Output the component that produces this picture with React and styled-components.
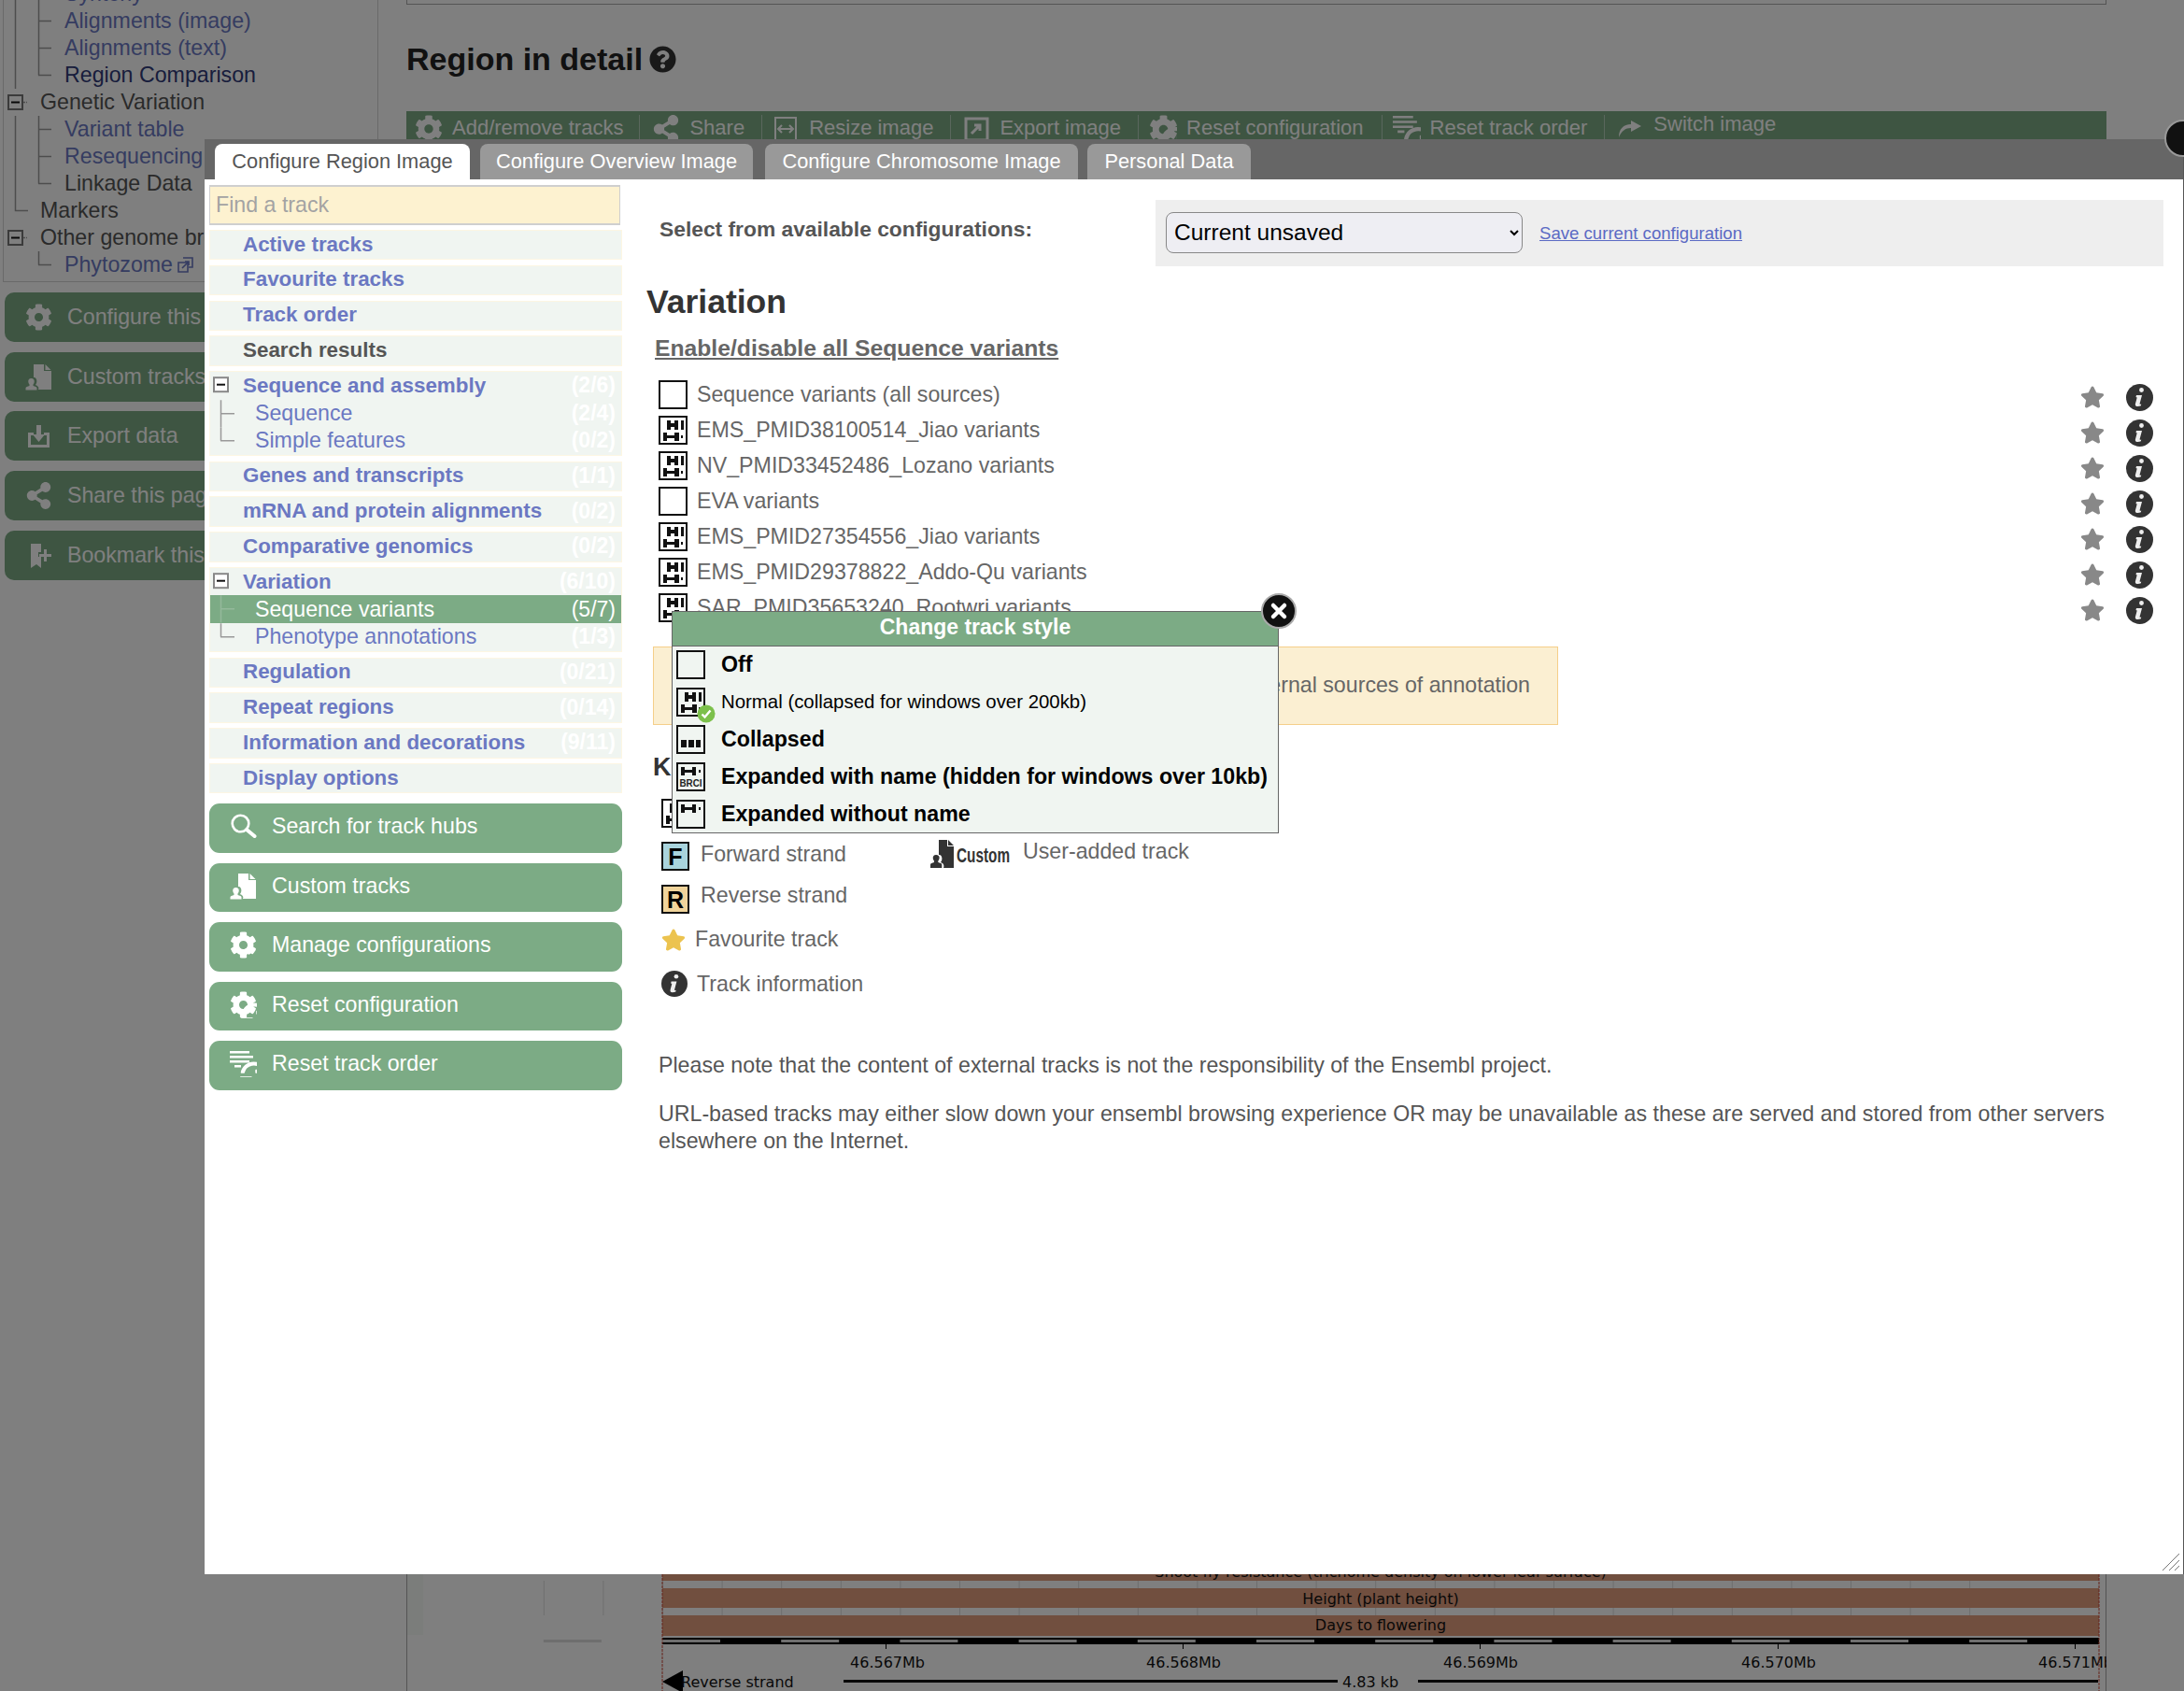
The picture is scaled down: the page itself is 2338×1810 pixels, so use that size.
import React from 'react';
import styled, { createGlobalStyle } from 'styled-components';
import { FaCog, FaShareAlt, FaStar, FaQuestionCircle, FaSync } from 'react-icons/fa';

const Global = createGlobalStyle`
  html, body { margin: 0; padding: 0; background: #fff; }
  body { font-family: "Liberation Sans", Arial, sans-serif; font-size: 23.2px; color: #666; overflow: hidden; }
  * { box-sizing: border-box; }
`;

const Page = styled.div`
  position: relative; width: 2338px; height: 1810px; overflow: hidden; display: flex; background: #fff;
`;
const Dim = styled.div`
  position: absolute; inset: 0; background: rgba(0, 0, 0, 0.5); z-index: 5;
`;

/* ---------- background page ---------- */
const LeftColumn = styled.aside`
  width: 435px; flex: none; padding: 0 0 0 3px;
`;
const TreePanel = styled.nav`
  width: 402px; height: 302px; border: 1px solid #d2d2d2; border-top: 0; padding-top: 0; overflow: hidden;
`;
const TreeInner = styled.div`
  margin-top: -21px;
`;
const TreeRowBox = styled.div`
  height: 29.05px; display: flex; align-items: center; white-space: nowrap; margin-left: -4px;
  color: ${p => p.$c || '#6b78c2'};
`;
const ExtIcon = styled.svg`
  width: 19px; height: 19px; margin-left: 4px; flex: none;
`;
const SideButtons = styled.div`
  display: flex; flex-direction: column; gap: 10.7px; margin: 11px 0 0 2px;
`;
const SideButton = styled.div`
  width: 390px; height: 53px; background: #7cab85; border-radius: 10px; color: #fff; display: flex; align-items: center;
  padding-left: 22px; gap: 16px; white-space: nowrap;
  svg { width: 29px; height: 29px; flex: none; }
`;
const RightColumn = styled.main`
  flex: 1; min-width: 0; display: flex; flex-direction: column; height: 1810px; padding-right: 83px;
`;
const TopBox = styled.div`
  height: 5px; border: 1px solid #a8a8a8; border-top: 0; background: #fff;
`;
const RegionTitle = styled.h2`
  margin: 38px 0 0; font-size: 34px; line-height: 40px; color: #222; font-weight: 700; display: flex; align-items: center; gap: 7px;
  svg { width: 29px; height: 29px; color: #333; }
`;
const Toolbar = styled.div`
  height: 31px; margin-top: 36px; background: #7cab85; display: flex; color: #fff; font-size: 22px; padding-top: 4px; overflow: visible; white-space: nowrap;
`;
const ToolItem = styled.div`
  display: flex; align-items: flex-start; gap: 10px; height: 30px; line-height: 26px; padding: 0 ${p => p.$pr || 16}px 0 ${p => p.$pl || 10}px;
  border-right: ${p => (p.$last ? 0 : '1px solid #b5cfba')}; flex: none;
  svg { width: 30px; height: 30px; flex: none; }
  span { display: block; margin-top: ${p => p.$up ? -3 : 1}px; }
`;
const TrackSvg = styled.svg`
  display: block; margin-top: auto; width: 1820px; height: 125px; flex: none;
`;

/* ---------- modal ---------- */
const Modal = styled.div`
  position: absolute; left: 219px; top: 149px; width: 2119px; height: 1536px; z-index: 10;
  background: #666; display: flex; flex-direction: column; border-right: 1px solid #555;
`;
const ModalClose = styled.div`
  position: absolute; right: -20px; top: -21px; width: 40px; height: 40px; border-radius: 50%;
  background: #111; border: 2px solid #999;
`;
const Tabs = styled.div`
  height: 43px; display: flex; align-items: flex-end; padding-left: 11px; flex: none;
`;
const Tab = styled.div`
  height: 38px; line-height: 38px; border-radius: 8px 8px 0 0; font-size: 21.8px; white-space: nowrap;
  width: ${p => p.$w}px; margin-right: ${p => p.$mr}px; text-align: center;
  background: ${p => (p.$active ? '#fff' : '#999')}; color: ${p => (p.$active ? '#555' : '#fff')};
`;
const ModalBody = styled.div`
  flex: 1; background: #fff; display: flex; min-height: 0; position: relative;
`;
const Sidebar = styled.div`
  width: 447px; flex: none; padding: 6px 0 0 5px;
`;
const FindInput = styled.input`
  display: block; width: 440px; height: 43px; background: #fdf2d0; border: 1px solid #cfcfcf; border-width: 2px 1px; padding: 0 6px;
  font: 23.2px "Liberation Sans", Arial, sans-serif; color: #555;
  &::placeholder { color: #a3a3a3; opacity: 1; }
`;
const NavList = styled.div`
  margin-top: 5px; width: 442px; display: flex; flex-direction: column; gap: 5.4px;
`;
const NavGroup = styled.div`
  background: #f0f5f1; border: 1px solid #fdf6e3; padding-bottom: 1px;
`;
const NavLine = styled.div`
  height: 29.4px; display: flex; align-items: center; padding-right: 6px; white-space: nowrap;
  background: ${p => (p.$on ? '#7cab85' : 'transparent')};
  color: ${p => (p.$on ? '#fff' : p.$plain ? '#555' : '#6b78c2')};
  font-weight: ${p => (p.$sub ? 400 : 700)};
  font-size: ${p => (p.$sub ? '23.2px' : '22.4px')};
`;
const NavGutter = styled.svg`
  width: ${p => (p.$sub ? 48 : 35)}px; height: 29.4px; flex: none;
`;
const NavCount = styled.span`
  margin-left: auto; color: #fff; font-weight: ${p => (p.$on ? 400 : 700)}; font-size: 23px;
`;
const ActionList = styled.div`
  margin-top: 11px; width: 442px; display: flex; flex-direction: column; gap: 11px;
`;
const ActionButton = styled.div`
  height: 52.5px; background: #7cab85; border-radius: 11px; color: #fff; display: flex; align-items: center; padding: 0 0 4px 22px; gap: 16px; white-space: nowrap;
  svg { width: 29px; height: 29px; flex: none; }
`;

const Content = styled.div`
  flex: 1; min-width: 0; padding: 22px 21px 0 26px;
`;
const ConfigRow = styled.div`
  display: flex; align-items: center;
`;
const ConfigLabel = styled.div`
  width: 545px; flex: none; padding: 0 0 9px 14px; font-weight: 700; color: #555; font-size: 22.8px; white-space: nowrap;
`;
const ConfigBar = styled.div`
  flex: 1; height: 71px; background: #eee; display: flex; align-items: center; padding: 0 0 2px 11px; gap: 18px;
`;
const ConfigSelect = styled.select`
  width: 382px; height: 44px; background: #eeeef3; border: 1px solid #888; border-radius: 8px; padding: 0 4px;
  font: 24.5px "Liberation Sans", Arial, sans-serif; color: #000;
`;
const SaveLink = styled.a`
  color: #5b6ac4; text-decoration: underline; font-size: 18.6px; margin-top: 2px; cursor: pointer;
`;
const H1 = styled.h1`
  margin: 16px 0 0; font-size: 35.5px; line-height: 44px; font-weight: 700; color: #333;
`;
const EnableLink = styled.a`
  display: inline-block; margin: 13px 0 0 9px; font-size: 24.7px; line-height: 30px; font-weight: 700; color: #666; text-decoration: underline; cursor: pointer;
`;
const TrackList = styled.div`
  margin: 19px 11px 0 13px; display: flex; flex-direction: column; gap: 7px;
`;
const TrackRow = styled.div`
  height: 31px; display: flex; align-items: center; gap: 10px; white-space: nowrap;
`;
const StyleGlyph = styled.svg`
  width: 31px; height: 31px; flex: none; display: block;
`;
const TrackName = styled.span`
  color: #666; line-height: 29px; margin-top: -1px;
`;
const RowTools = styled.div`
  margin-left: auto; display: flex; align-items: center; gap: 23px; margin-top: 5px;
`;
const Star = styled(FaStar)`
  width: 26px; height: 26px; color: ${p => p.$c || '#888'}; flex: none;
`;
const InfoGlyph = styled.svg`
  width: ${p => p.$s || 29}px; height: ${p => p.$s || 29}px; flex: none;
`;
const Notice = styled.div`
  margin: 26px 0 0 7px; width: 969px; height: 84px; background: #fbefd2; border: 1px solid #f5cf8a; display: flex; align-items: center; justify-content: flex-end;
  padding: 0 29px 2px 0; color: #666; white-space: nowrap;
`;
const KeyTitle = styled.h3`
  margin: 30px 0 0 7px; font-size: 27px; line-height: 31px; font-weight: 700; color: #333;
`;
const KeyGrid = styled.div`
  display: flex; margin: 18px 0 0 16px;
`;
const KeyColumn = styled.div`
  width: ${p => p.$w}px; flex: none; display: flex; flex-direction: column;
`;
const KeyRow = styled.div`
  height: ${p => p.$h || 46}px; display: flex; align-items: flex-start; gap: ${p => p.$g || 12}px; color: #666; white-space: nowrap;
`;
const StrandBox = styled.div`
  width: 30px; height: 31px; border: 2px solid #111; background: ${p => p.$bg}; color: #000; font-weight: 700; font-size: 25px; line-height: 28px; text-align: center; flex: none;
`;
const KeyText = styled.span`
  display: block; margin-top: ${p => p.$mt || 0}px; line-height: 29px;
`;
const Para = styled.p`
  margin: ${p => p.$mt}px 0 0 13px; width: 1570px; color: #555; font-size: 23.2px; line-height: 29px;
`;
const Resize = styled.svg`
  position: absolute; right: 3px; bottom: 3px; width: 20px; height: 20px;
`;

/* ---------- popup ---------- */
const Popup = styled.div`
  position: absolute; left: 500px; top: 462px; width: 650px; height: 238px; background: #f0f5f1; border: 1px solid #666; z-index: 3;
`;
const PopupClose = styled.svg`
  position: absolute; right: -20px; top: -20px; width: 38px; height: 38px;
`;
const PopupHead = styled.div`
  height: 37px; background: #7cab85; border-bottom: 1px solid #666; color: #fff; text-align: center; font-weight: 700; font-size: 23px; line-height: 33px;
`;
const PopupRows = styled.div`
  padding: 4px 0 0 4px; display: flex; flex-direction: column; gap: 9px;
`;
const PopupRow = styled.div`
  height: 31px; display: flex; align-items: center; gap: 17px; white-space: nowrap; color: #000;
  font-weight: ${p => (p.$on ? 400 : 700)}; font-size: ${p => (p.$on ? '20.4px' : '23.2px')};
`;
const GlyphWrap = styled.div`
  position: relative; width: 31px; height: 31px; flex: none;
`;
const Tick = styled.svg`
  position: absolute; right: -11px; bottom: -7px; width: 20px; height: 20px;
`;

/* ---------- drawings ---------- */
const BLOCKS = {
  off: [],
  normal: [[9, 5, 4, 10], [17, 5, 4, 10], [13, 8, 4, 4], [24, 5, 3, 10], [5, 18, 4, 9], [17, 18, 5, 9], [9, 21, 8, 3], [24, 21, 2, 3]],
  collapsed: [[5, 16, 6, 8], [13, 16, 6, 8], [21, 16, 5, 8]],
  expanded: [[5, 5, 4, 9], [17, 5, 4, 9], [9, 8, 8, 3], [24, 8, 2, 3]],
  named: [[5, 5, 4, 9], [17, 5, 4, 9], [9, 8, 8, 3], [24, 8, 2, 3]],
};
const TrackGlyph = ({ kind, bg = '#fff' }) => (
  <StyleGlyph viewBox="0 0 31 31">
    <rect x="1" y="1" width="29" height="29" fill={bg} stroke="#111" strokeWidth="2" />
    {BLOCKS[kind].map((b, i) => <rect key={i} x={b[0]} y={b[1]} width={b[2]} height={b[3]} fill="#111" />)}
    {kind === 'named' && <text x="15.5" y="26" textAnchor="middle" fontSize="10" fontFamily="Liberation Sans" textLength="24" lengthAdjust="spacingAndGlyphs" fill="#222">BRCI</text>}
  </StyleGlyph>
);
const Info = ({ s }) => (
  <InfoGlyph $s={s} viewBox="0 0 29 29">
    <circle cx="14.5" cy="14.5" r="14.5" fill="#333" />
    <circle cx="16.5" cy="6.5" r="2.4" fill="#eee" />
    <path d="M11 12h6l-2.4 9c-.2.8.2 1 1.6.6l-.3 1.6c-1 .5-2.4.8-3.6.8-2 0-2.8-1-2.3-3l1.7-6.6-1.2-.4z" fill="#eee" />
  </InfoGlyph>
);
const CustomFile = ({ c = '#fff' }) => (
  <svg viewBox="0 0 29 29">
    <path d="M9 1h11v7h8v20H14c1-2 0-4-3-5 2-2 2-7-1-8-1 0-1 0-1 0z" fill={c} />
    <path d="M21.5 1l6 6h-6z" fill={c} />
    <path d="M6.5 16c2.600 0 3.500 2 3.200 4-.2 1.200-.7 2-1.200 2.600v1.400c2 .6 4 1 4 2.500V28.500H.5V26.500c0-1.500 2-1.900 4-2.500v-1.400c-.5-.6-1-1.400-1.200-2.600-.3-2 .6-4 3.200-4z" fill={c} />
  </svg>
);
const Search = () => (
  <svg viewBox="0 0 29 29">
    <circle cx="11.500" cy="11.500" r="8.800" fill="none" stroke="#fff" strokeWidth="2.600" />
    <path d="M18 18l8.500 7" stroke="#fff" strokeWidth="4" strokeLinecap="round" />
  </svg>
);
const ExportData = () => (
  <svg viewBox="0 0 29 29">
    <path d="M3 11h6v3H6v10h17V14h-3v-3h6v16H3z" fill="#fff" />
    <path d="M12 3h5v10h4l-6.500 8L8 13h4z" fill="#fff" />
  </svg>
);
const BookmarkPlus = () => (
  <svg viewBox="0 0 29 29">
    <path d="M6 2h11v9h-3v5h3v12l-5-4-6 4z" fill="#fff" />
    <path d="M20 8h3v5h5v3h-5v5h-3v-5h-5v-3h5z" fill="#fff" />
  </svg>
);
const ResizeImage = () => (
  <svg viewBox="0 0 30 30">
    <rect x="4" y="3" width="22" height="24" fill="none" stroke="#fff" strokeWidth="2" />
    <path d="M7 15h16M11 11l-4 4 4 4M19 11l4 4-4 4" fill="none" stroke="#fff" strokeWidth="2" />
  </svg>
);
const ExportImage = () => (
  <svg viewBox="0 0 30 30">
    <rect x="4" y="4" width="23" height="23" fill="none" stroke="#fff" strokeWidth="3" />
    <path d="M10 20l8-8M13 11h6v6" fill="none" stroke="#fff" strokeWidth="3" />
  </svg>
);
const SwitchImage = () => (
  <svg viewBox="0 0 30 30">
    <path d="M16 6l11 6-11 6v-4C10 14 6 17 3 24c0-9 5-14 13-14z" fill="#fff" />
  </svg>
);
const ComboGlyph = ({ second }) => (
  <svg viewBox="0 0 29 29">
    <g transform="translate(0 0)"><FaCog x="0" y="0" width="19" height="19" color="#fff" /></g>
    {second === 'arrow'
      ? <path d="M11 26c1-5 4-8 9-8v-3l8 5-8 5v-3c-3 0-6 1-9 4z" fill="#fff" />
      : <g><FaSync x="12" y="12" width="17" height="17" color="#fff" /></g>}
  </svg>
);
const OrderGlyph = () => (
  <svg viewBox="0 0 29 29">
    <path d="M0 1h21v2.500H0zM0 6h25v2.500H0zM0 11h21v2.500H0zM5 16h7v2.500H5z" fill="#fff" />
    <FaSync x="11" y="12" width="18" height="17" color="#fff" />
  </svg>
);

const TreeLines = ({ main, sub, head }) => (
  <svg width={sub ? 69 : 43} height="29" style={{ flex: 'none' }}>
    {main && <path d="M16.5 0V29" stroke="#9a9a9a" strokeWidth="1.500" />}
    {sub === 'mid' && <path d="M41.500 0V29M41 14.500H55" stroke="#9a9a9a" strokeWidth="1.500" fill="none" />}
    {sub === 'last' && <path d="M41.500 0V14.500M41 14.500H55" stroke="#9a9a9a" strokeWidth="1.500" fill="none" />}
    {head === 'branch' && <path d="M16.500 0V14.500H30" stroke="#9a9a9a" strokeWidth="1.500" fill="none" />}
    {head === 'box' && <g>
      <rect x="9" y="7" width="15" height="15" fill="none" stroke="#777" strokeWidth="2" />
      <path d="M12 14.500h9" stroke="#111" strokeWidth="2" />
      <path d="M25 14.500h4" stroke="#9a9a9a" strokeWidth="1.500" strokeDasharray="2 1" />
    </g>}
  </svg>
);
const Tree = ({ rows }) => rows.map((r, i) => (
  <TreeRowBox key={i} $c={r.c}>
    <TreeLines main={r.main} sub={r.sub} head={r.head} />
    {r.t}
    {r.ext && <ExtIcon viewBox="0 0 19 19"><path d="M2 7h10v10H2zM7 2h10v10h-4" fill="none" stroke="#6b78c2" strokeWidth="1.600" /><path d="M6 13l7-7M9 6h4v4" fill="none" stroke="#6b78c2" strokeWidth="1.600" /></ExtIcon>}
  </TreeRowBox>
));

const TREE = [
  { t: 'Synteny', main: 1, sub: 'mid' },
  { t: 'Alignments (image)', main: 1, sub: 'mid' },
  { t: 'Alignments (text)', main: 1, sub: 'mid' },
  { t: 'Region Comparison', main: 1, sub: 'last', c: '#303a78' },
  { t: 'Genetic Variation', head: 'box', c: '#555' },
  { t: 'Variant table', main: 1, sub: 'mid' },
  { t: 'Resequencing', main: 1, sub: 'mid' },
  { t: 'Linkage Data', main: 1, sub: 'last', c: '#555' },
  { t: 'Markers', head: 'branch', c: '#555' },
  { t: 'Other genome browsers', head: 'box', c: '#555' },
  { t: 'Phytozome', sub: 'last', ext: 1 },
];
const SIDE = [
  [<FaCog key="a" />, 'Configure this page'],
  [<CustomFile key="b" />, 'Custom tracks'],
  [<ExportData key="c" />, 'Export data'],
  [<FaShareAlt key="d" />, 'Share this page'],
  [<BookmarkPlus key="e" />, 'Bookmark this page'],
];
const TOOLS = [
  { i: <FaCog />, t: 'Add/remove tracks', pl: 9, pr: 17, g: 10 },
  { i: <FaShareAlt />, t: 'Share', pl: 13, pr: 18 },
  { i: <ResizeImage />, t: 'Resize image', pl: 10, pr: 18 },
  { i: <ExportImage />, t: 'Export image', pl: 12, pr: 18 },
  { i: <ComboGlyph />, t: 'Reset configuration', pl: 11, pr: 19 },
  { i: <OrderGlyph />, t: 'Reset track order', pl: 11, pr: 18 },
  { i: <SwitchImage />, t: 'Switch image', pl: 12, last: 1, up: 1 },
];
const NAV = [
  { t: 'Active tracks' }, { t: 'Favourite tracks' }, { t: 'Track order' }, { t: 'Search results', plain: 1 },
  { t: 'Sequence and assembly', n: '(2/6)', kids: [{ t: 'Sequence', n: '(2/4)' }, { t: 'Simple features', n: '(0/2)' }] },
  { t: 'Genes and transcripts', n: '(1/1)' },
  { t: 'mRNA and protein alignments', n: '(0/2)' },
  { t: 'Comparative genomics', n: '(0/2)' },
  { t: 'Variation', n: '(6/10)', kids: [{ t: 'Sequence variants', n: '(5/7)', on: 1 }, { t: 'Phenotype annotations', n: '(1/3)' }] },
  { t: 'Regulation', n: '(0/21)' }, { t: 'Repeat regions', n: '(0/14)' },
  { t: 'Information and decorations', n: '(9/11)' }, { t: 'Display options' },
];
const ACTIONS = [
  [<Search key="a" />, 'Search for track hubs'],
  [<CustomFile key="b" />, 'Custom tracks'],
  [<ComboGlyph key="c" second="arrow" />, 'Manage configurations'],
  [<ComboGlyph key="d" />, 'Reset configuration'],
  [<OrderGlyph key="e" />, 'Reset track order'],
];
const TRACKS = [
  ['off', 'Sequence variants (all sources)'],
  ['normal', 'EMS_PMID38100514_Jiao variants'],
  ['normal', 'NV_PMID33452486_Lozano variants'],
  ['off', 'EVA variants'],
  ['normal', 'EMS_PMID27354556_Jiao variants'],
  ['normal', 'EMS_PMID29378822_Addo-Qu variants'],
  ['normal', 'SAR_PMID35653240_Rootwri variants'],
];
const POPUP = [
  ['off', 'Off'], ['normal', 'Normal (collapsed for windows over 200kb)', 1], ['collapsed', 'Collapsed'],
  ['named', 'Expanded with name (hidden for windows over 10kb)'], ['expanded', 'Expanded without name'],
];

const TrackImage = () => {
  const gridX = Array.from({ length: 25 }, (_, i) => 274 + (i - 2) * 63.6);
  const seg = Array.from({ length: 13 }, (_, i) => 274 + (i - 1) * 127.2);
  const labels = [['46.567Mb', 515], ['46.568Mb', 832], ['46.569Mb', 1150], ['46.570Mb', 1469], ['46.571Mb', 1787]];
  const txt = { fontFamily: 'DejaVu Sans', fontSize: 16, fill: '#111' };
  return (
    <TrackSvg viewBox="0 0 1820 125">
      <rect x="0" width="1" height="125" fill="#a8a8a8" />
      <rect x="1819" width="1" height="125" fill="#a8a8a8" />
      <rect x="1" width="17" height="65" fill="#f6faf7" />
      {[7, 44].map(y => <rect key={y} x="274" y={y} width="1538" height="8" fill="#fff" />)}
      {gridX.map((x, i) => <rect key={i} x={x} y="7" width="1" height="37" fill="#ddd" />)}
      <rect x="274" y="-1" width="1538" height="8" fill="#e29e7e" />
      <rect x="274" y="15" width="1538" height="21" fill="#e29e7e" />
      <rect x="274" y="44" width="1538" height="22" fill="#e29e7e" />
      <text x="1043" y="3" textAnchor="middle" {...txt}>Shoot fly resistance (trichome density on lower leaf surface)</text>
      <text x="1043" y="32" textAnchor="middle" {...txt}>Height (plant height)</text>
      <text x="1043" y="60" textAnchor="middle" {...txt}>Days to flowering</text>
      <rect x="274" y="68" width="1538" height="7" fill="#000" />
      {seg.map((x, i) => <rect key={i} x={x} y="70" width="62" height="3" fill="#ddd" />)}
      {[1787 - 1273, 832, 1150, 1469, 1787].map(x => <rect key={x} x={x - 1} y="75" width="1" height="5" fill="#000" />)}
      {labels.map(([t, x]) => <text key={t} x={x} y="100" textAnchor="middle" {...txt}>{t}</text>)}
      <path d="M274 115l22-12v24z" fill="#000" transform="translate(0 0)" />
      <text x="294" y="121" {...txt}>Reverse strand</text>
      <rect x="468" y="113" width="529" height="3" fill="#111" />
      <text x="1002" y="121" {...txt}>4.83 kb</text>
      <rect x="1083" y="113" width="728" height="3" fill="#111" />
      <path d="M274 0V125M1812 0V125" stroke="#c43" strokeWidth="1" strokeDasharray="3 1" />
    </TrackSvg>
  );
};

export default function App() {
  return (
    <Page>
      <Global />
      <LeftColumn>
        <TreePanel><TreeInner><Tree rows={TREE} /></TreeInner></TreePanel>
        <SideButtons>{SIDE.map(([i, t]) => <SideButton key={t}>{i}{t}</SideButton>)}</SideButtons>
      </LeftColumn>
      <RightColumn>
        <TopBox />
        <RegionTitle>Region in detail <FaQuestionCircle /></RegionTitle>
        <Toolbar>
          {TOOLS.map(x => (
            <ToolItem key={x.t} $pl={x.pl} $pr={x.pr} $last={x.last} $up={x.up}>{x.i}<span>{x.t}</span></ToolItem>
          ))}
        </Toolbar>
        <TrackImage />
      </RightColumn>
      <Dim />
      <Modal>
        <ModalClose />
        <Tabs>
          <Tab $active $w={273} $mr={11}>Configure Region Image</Tab>
          <Tab $w={292} $mr={13}>Configure Overview Image</Tab>
          <Tab $w={335} $mr={10}>Configure Chromosome Image</Tab>
          <Tab $w={175} $mr={0}>Personal Data</Tab>
        </Tabs>
        <ModalBody>
          <Sidebar>
            <FindInput placeholder="Find a track" readOnly />
            <NavList>
              {NAV.map(g => (
                <NavGroup key={g.t}>
                  <NavLine $plain={g.plain}>
                    <NavGutter viewBox="0 0 35 29">
                      {g.kids && <g><rect x="4" y="6" width="15" height="15" fill="#fff" stroke="#888" strokeWidth="2" /><path d="M7 13.500h9" stroke="#111" strokeWidth="2" /></g>}
                    </NavGutter>
                    {g.t}{g.n && <NavCount>{g.n}</NavCount>}
                  </NavLine>
                  {g.kids && g.kids.map((k, i) => (
                    <NavLine key={k.t} $sub $on={k.on}>
                      <NavGutter $sub viewBox="0 0 48 29">
                        <path d={i === 0 ? 'M11.500 0V29M11 14.500H26' : 'M11.500 0V14.500M11 14.500H26'} stroke={k.on ? '#94b99b' : '#999'} strokeWidth="1.500" fill="none" />
                      </NavGutter>
                      {k.t}<NavCount $on={k.on}>{k.n}</NavCount>
                    </NavLine>
                  ))}
                </NavGroup>
              ))}
            </NavList>
            <ActionList>{ACTIONS.map(([i, t]) => <ActionButton key={t}>{i}{t}</ActionButton>)}</ActionList>
          </Sidebar>
          <Content>
            <ConfigRow>
              <ConfigLabel>Select from available configurations:</ConfigLabel>
              <ConfigBar>
                <ConfigSelect defaultValue="c"><option value="c">Current unsaved</option></ConfigSelect>
                <SaveLink>Save current configuration</SaveLink>
              </ConfigBar>
            </ConfigRow>
            <H1>Variation</H1>
            <EnableLink>Enable/disable all Sequence variants</EnableLink>
            <TrackList>
              {TRACKS.map(([k, t]) => (
                <TrackRow key={t}>
                  <TrackGlyph kind={k} />
                  <TrackName>{t}</TrackName>
                  <RowTools><Star /><Info /></RowTools>
                </TrackRow>
              ))}
            </TrackList>
            <Notice>Some tracks on this page come from external sources of annotation</Notice>
            <KeyTitle>Key</KeyTitle>
            <KeyGrid>
              <KeyColumn $w={288}>
                <KeyRow><TrackGlyph kind="normal" /><KeyText>Track style</KeyText></KeyRow>
                <KeyRow><StrandBox $bg="#a9d4dd">F</StrandBox><KeyText $mt={-1}>Forward strand</KeyText></KeyRow>
                <KeyRow><StrandBox $bg="#f0d49b">R</StrandBox><KeyText $mt={-3}>Reverse strand</KeyText></KeyRow>
                <KeyRow $g={10}><Star $c="#ecc34f" /><KeyText $mt={-2}>Favourite track</KeyText></KeyRow>
                <KeyRow $g={10}><Info s={28} /><KeyText>Track information</KeyText></KeyRow>
              </KeyColumn>
              <KeyColumn $w={700}>
                <KeyRow $h={44}><Info s={30} /><KeyText>Track notes</KeyText></KeyRow>
                <KeyRow $g={9}>
                  <svg width="90" height="30" viewBox="0 0 90 30" style={{ flex: 'none' }}>
                    <g transform="scale(1)"><path d="M9 0h9v7h7v23H14c1-3 0-5-3-6 2-2 2-7-1-8-1 0-1 0-1 0zM19 0l6 6h-6zM6 16c3 0 4 2 3.500 4-.2 1.200-.7 2-1.200 2.600V24c2 .6 4 1 4 2.500V30H0v-3.500c0-1.500 2-1.900 4-2.500v-1.400c-.5-.6-1-1.400-1.200-2.600-.3-2 .6-4 3.200-4z" fill="#333" /></g>
                    <text x="28" y="24" fontFamily="Liberation Sans" fontWeight="700" fontSize="22" textLength="57" lengthAdjust="spacingAndGlyphs" fill="#333">Custom</text>
                  </svg>
                  <KeyText $mt={-2}>User-added track</KeyText>
                </KeyRow>
              </KeyColumn>
            </KeyGrid>
            <Para $mt={41}>Please note that the content of external tracks is not the responsibility of the Ensembl project.</Para>
            <Para $mt={23}>URL-based tracks may either slow down your ensembl browsing experience OR may be unavailable as these are served and stored from other servers elsewhere on the Internet.</Para>
          </Content>
          <Popup>
            <PopupHead>Change track style</PopupHead>
            <PopupClose viewBox="0 0 38 38">
              <circle cx="19" cy="19" r="18" fill="#111" stroke="#aaa" strokeWidth="2" />
              <path d="M13 13l12 12M25 13L13 25" stroke="#fff" strokeWidth="4.500" strokeLinecap="round" />
            </PopupClose>
            <PopupRows>
              {POPUP.map(([k, t, on]) => (
                <PopupRow key={k} $on={on}>
                  <GlyphWrap>
                    <TrackGlyph kind={k} bg="#f0f5f1" />
                    {on && <Tick viewBox="0 0 20 20"><circle cx="10" cy="10" r="9.500" fill="#7cc04b" /><path d="M5.500 10.500l3 3 6-7" fill="none" stroke="#fff" strokeWidth="2.400" /></Tick>}
                  </GlyphWrap>
                  {t}
                </PopupRow>
              ))}
            </PopupRows>
          </Popup>
          <Resize viewBox="0 0 20 20"><path d="M1 19L19 1M8 19L19 8M14 19l5-5" stroke="#777" strokeWidth="1" fill="none" /></Resize>
        </ModalBody>
      </Modal>
    </Page>
  );
}
